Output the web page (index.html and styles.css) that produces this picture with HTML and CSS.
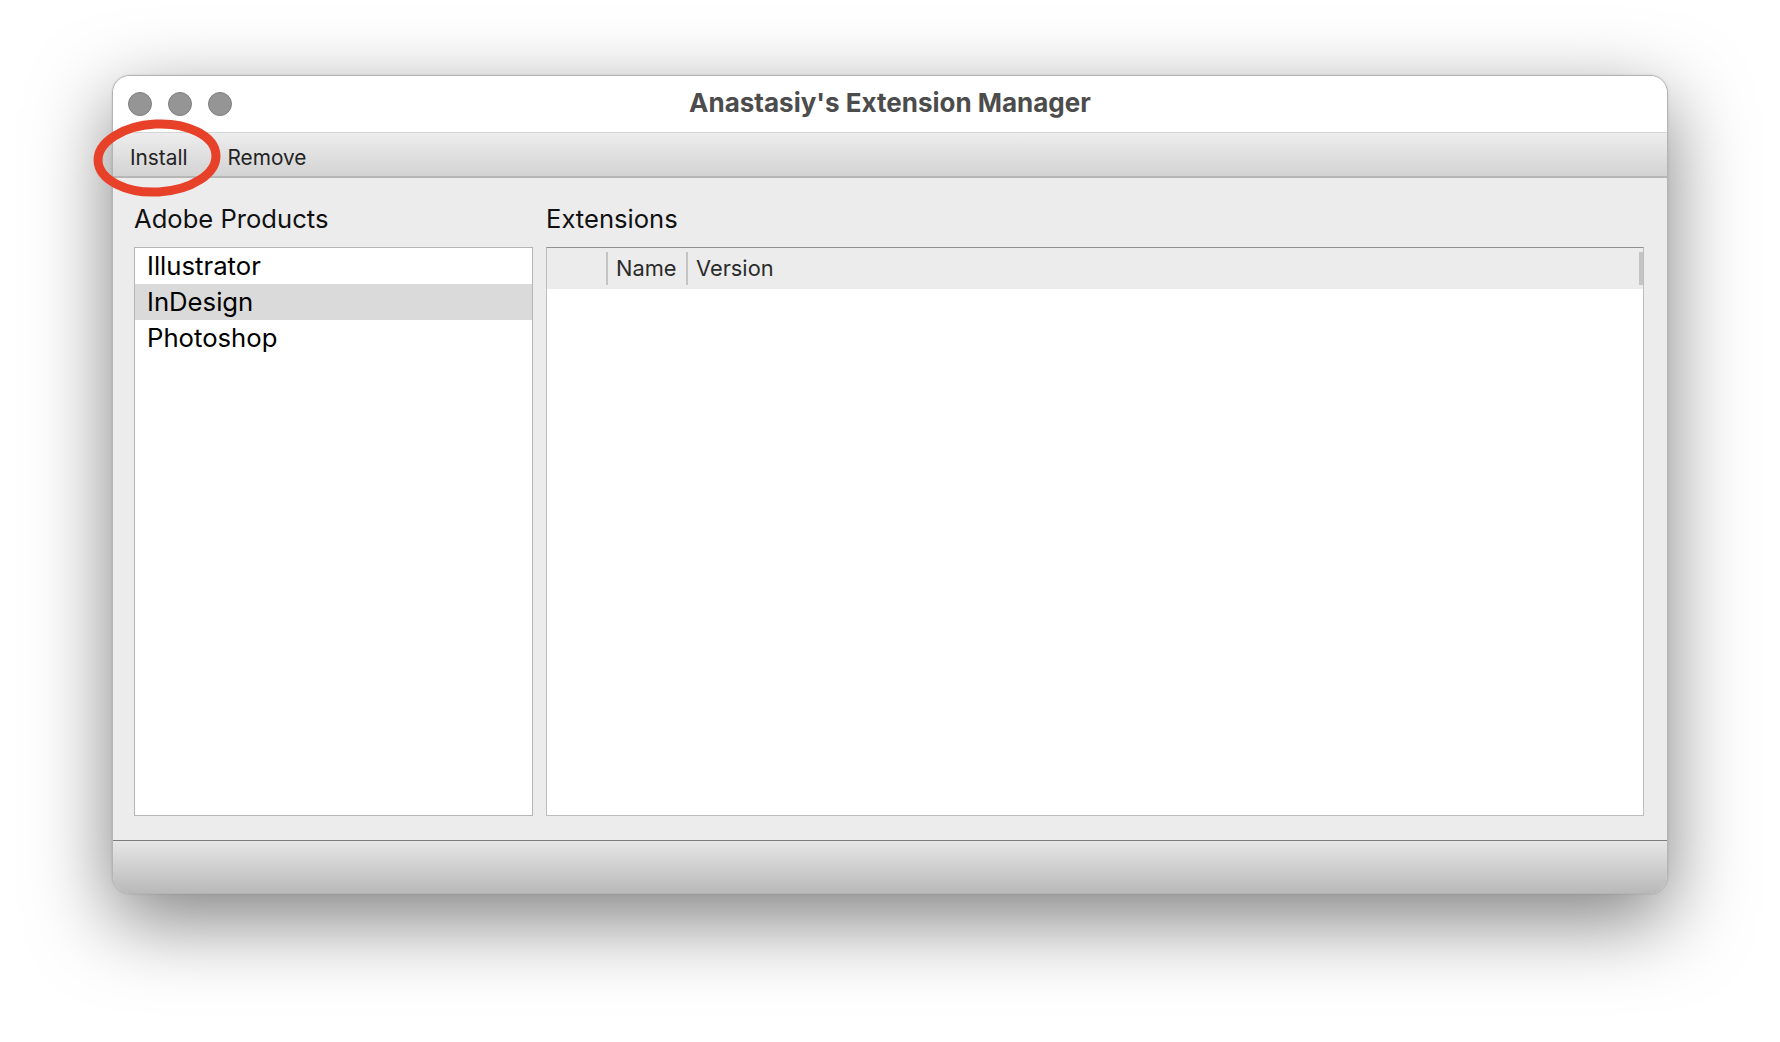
FILE: index.html
```html
<!DOCTYPE html>
<html>
<head>
<meta charset="utf-8">
<title>Anastasiy's Extension Manager</title>
<link rel="stylesheet" href="styles.css">
</head>
<body>
<div class="window">
  <div class="titlebar">
    <div class="lights">
      <span class="light"></span><span class="light"></span><span class="light"></span>
    </div>
    <div class="title">Anastasiy's Extension Manager</div>
    <div></div>
  </div>
  <div class="toolbar">
    <span class="tool">Install</span>
    <span class="tool">Remove</span>
  </div>
  <div class="content">
    <div class="heading">Adobe Products</div>
    <div class="heading">Extensions</div>
    <div class="box list">
      <div class="item">Illustrator</div>
      <div class="item selected">InDesign</div>
      <div class="item">Photoshop</div>
    </div>
    <div class="box table">
      <div class="thead">
        <div class="th th-first"></div>
        <div class="th th-name">Name</div>
        <div class="th th-version">Version</div>
      </div>
    </div>
  </div>
  <div class="statusbar"></div>
</div>
<svg class="circle-mark" width="132" height="82" viewBox="0 0 132 82">
  <ellipse cx="66" cy="41" rx="59" ry="34" fill="none" stroke="#e8412a" stroke-width="9" transform="rotate(-3 66 41)"/>
</svg>
</body>
</html>
```

FILE: styles.css
```css
html, body {
  margin: 0;
  padding: 0;
  background: #ffffff;
}
body {
  position: relative;
  width: 1780px;
  height: 1042px;
  overflow: hidden;
  padding: 75px 0 0 112px;
  box-sizing: border-box;
  font-family: "Inter", "Liberation Sans", sans-serif;
}
.window {
  width: 1556px;
  height: 819px;
  box-sizing: border-box;
  border: 1px solid #b4b4b4;
  border-radius: 18px;
  overflow: hidden;
  display: flex;
  flex-direction: column;
  background: #ececec;
  box-shadow: 0 26px 80px rgba(0,0,0,0.5), 0 0 2px rgba(0,0,0,0.15);
}
.titlebar {
  height: 56px;
  flex: none;
  background: #ffffff;
  border-bottom: 1px solid #d6d6d6;
  display: grid;
  grid-template-columns: 1fr auto 1fr;
  align-items: center;
}
.lights {
  display: flex;
  gap: 16px;
  padding-left: 15px;
  margin-top: -1px;
}
.light {
  width: 24px;
  height: 24px;
  box-sizing: border-box;
  border-radius: 50%;
  background: #959595;
  border: 1px solid #7f7f7f;
}
.title {
  font-weight: 700;
  font-size: 26px;
  color: #4c4c4c;
  margin-top: -3px;
}
.toolbar {
  height: 43px;
  flex: none;
  background: linear-gradient(#ededed, #d3d3d3);
  border-bottom: 2px solid #b6b6b6;
  display: flex;
  align-items: center;
  padding-left: 17px;
  gap: 40px;
}
.tool {
  font-size: 20.8px;
  color: #232323;
  padding-top: 6px;
}
.circle-mark {
  position: absolute;
  left: 91px;
  top: 117px;
}
.content {
  flex: 1;
  display: grid;
  grid-template-columns: 399px 1fr;
  grid-template-rows: 30px 1fr;
  column-gap: 13px;
  row-gap: 13px;
  padding: 26px 23px 24px 21px;
  border-bottom: 1px solid #7c7c7c;
}
.heading {
  font-size: 25.6px;
  line-height: 30px;
  color: #111111;
}
.box {
  background: #ffffff;
  box-sizing: border-box;
}
.list {
  border: 1px solid #b5b5b5;
}
.item {
  height: 36px;
  line-height: 36px;
  padding-left: 12px;
  font-size: 25.7px;
  color: #000000;
}
.selected {
  background: #dadada;
}
.table {
  border: 1px solid #bdbdbd;
  border-top-color: #8f8f8f;
}
.thead {
  height: 41px;
  background: #ececec;
  display: flex;
  align-items: center;
}
.th {
  height: 33px;
  line-height: 33px;
  font-size: 21.8px;
  color: #2b2b2b;
  box-sizing: border-box;
}
.th-first {
  width: 61px;
  border-right: 2px solid #c4c4c4;
}
.th-name {
  width: 80px;
  padding-left: 8px;
  border-right: 2px solid #c4c4c4;
}
.th-version {
  flex: 1;
  padding-left: 8px;
  border-right: 4px solid #c4c4c4;
}
.statusbar {
  height: 52px;
  flex: none;
  background: linear-gradient(#e6e6e6, #b9b9b9);
}
```
